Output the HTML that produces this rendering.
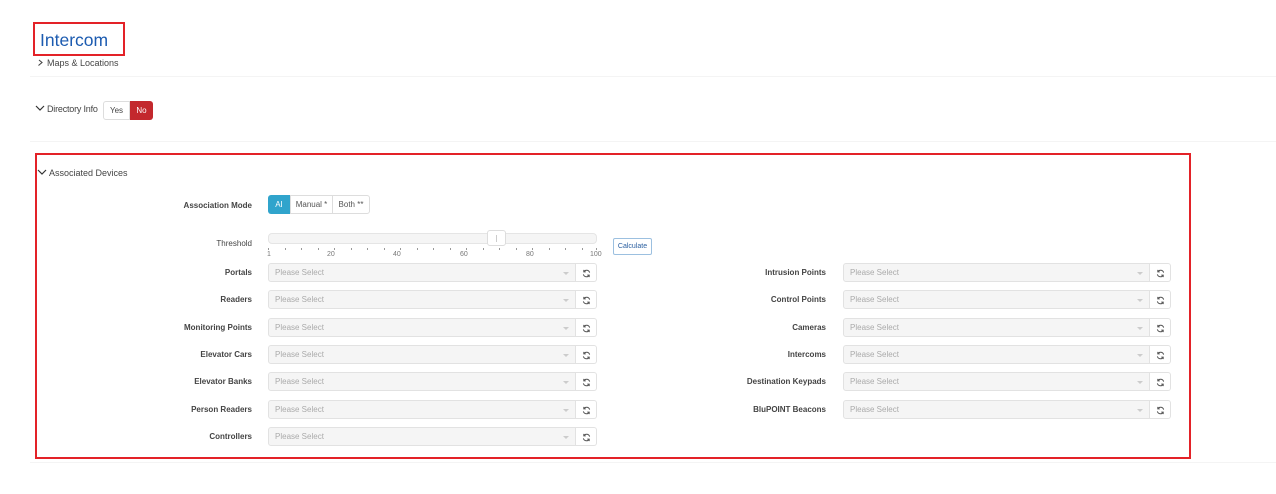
<!DOCTYPE html>
<html><head><meta charset="utf-8"><style>
*{box-sizing:border-box;margin:0;padding:0}
body{width:1276px;height:494px;background:#fff;font-family:"Liberation Sans",Arial,sans-serif;position:relative;overflow:hidden;color:#333}
.a{position:absolute}
.hr{position:absolute;height:1px;background:#f4f4f4}
.lbl{position:absolute;font-size:8px;font-weight:bold;color:#444;text-align:right;width:200px}
.sel{position:absolute;height:19px;background:#f5f5f5;border:1px solid #e2e2e2;border-radius:3px 0 0 3px;font-size:8px;color:#aaa;padding:4px 6px;line-height:9px}
.sel:after{content:"";position:absolute;right:6px;top:8px;border:3px solid transparent;border-top:3px solid #ccc}
.btn{position:absolute;height:19px;width:21px;background:#fff;border:1px solid #e2e2e2;border-left:none;border-radius:0 3px 3px 0}
.btn svg{position:absolute;left:6px;top:5px}
.tick{position:absolute;top:248px;width:1px;height:2px;background:#999}
.num{position:absolute;top:251px;font-size:7px;color:#777}
</style></head><body>
<div class="a" style="left:33px;top:22px;width:92px;height:34px;border:2px solid #e32228"></div>
<div class="a" style="left:40px;top:30px;font-size:17.5px;color:#1c5bb0">Intercom</div>
<svg class="a" style="left:37px;top:59px" width="7" height="7"><path d="M2 1L5 3.5L1.5 6.5" stroke="#444" stroke-width="1.1" fill="none"/></svg>
<div class="a" style="left:47px;top:58px;font-size:9px;color:#444">Maps &amp; Locations</div>
<div class="hr" style="left:30px;top:76px;width:1246px"></div>
<svg class="a" style="left:35px;top:105px" width="10" height="7"><path d="M1 1L5 5L9 1" stroke="#333" stroke-width="1.2" fill="none"/></svg>
<div class="a" style="left:47px;top:104px;font-size:9px;color:#444;letter-spacing:-0.2px">Directory Info</div>
<div class="a" style="left:103px;top:101px;width:27px;height:19px;border:1px solid #ddd;border-radius:3px 0 0 3px;font-size:8px;text-align:center;line-height:17px;color:#444">Yes</div>
<div class="a" style="left:130px;top:101px;width:23px;height:19px;background:#c3282d;border-radius:0 3px 3px 0;font-size:8px;text-align:center;line-height:19px;color:#fff">No</div>
<div class="hr" style="left:30px;top:141px;width:1246px"></div>
<div class="a" style="left:35px;top:153px;width:1156px;height:306px;border:2px solid #e32228"></div>
<div class="hr" style="left:30px;top:462px;width:1246px"></div>
<svg class="a" style="left:37px;top:169px" width="10" height="7"><path d="M1 1L5 5L9 1" stroke="#333" stroke-width="1.2" fill="none"/></svg>
<div class="a" style="left:49px;top:168px;font-size:9px;color:#444">Associated Devices</div>
<div class="lbl" style="left:52px;top:201px">Association Mode</div>
<div class="a" style="left:268px;top:195px;width:22px;height:19px;background:#30a4cc;border-radius:3px 0 0 3px;color:#fff;font-size:8px;text-align:center;line-height:19px">AI</div>
<div class="a" style="left:290px;top:195px;width:43px;height:19px;border:1px solid #ddd;font-size:8px;text-align:center;line-height:17px;color:#555">Manual *</div>
<div class="a" style="left:332px;top:195px;width:38px;height:19px;border:1px solid #ddd;border-radius:0 3px 3px 0;font-size:8px;text-align:center;line-height:17px;color:#555">Both **</div>
<div class="lbl" style="left:52px;top:239px;font-weight:normal;color:#444">Threshold</div>
<div class="a" style="left:268px;top:233px;width:329px;height:11px;background:#f5f5f5;border:1px solid #e5e5e5;border-radius:4px"></div>
<div class="a" style="left:487px;top:230px;width:19px;height:16px;background:#fff;border:1px solid #ddd;border-radius:3px"><div class="a" style="left:8px;top:4px;width:1px;height:7px;background:#ccc"></div></div>
<div class="tick" style="left:268px"></div><div class="tick" style="left:285px"></div><div class="tick" style="left:301px"></div><div class="tick" style="left:318px"></div><div class="tick" style="left:334px"></div><div class="tick" style="left:351px"></div><div class="tick" style="left:367px"></div><div class="tick" style="left:384px"></div><div class="tick" style="left:400px"></div><div class="tick" style="left:417px"></div><div class="tick" style="left:433px"></div><div class="tick" style="left:450px"></div><div class="tick" style="left:466px"></div><div class="tick" style="left:483px"></div><div class="tick" style="left:499px"></div><div class="tick" style="left:516px"></div><div class="tick" style="left:532px"></div><div class="tick" style="left:549px"></div><div class="tick" style="left:565px"></div><div class="tick" style="left:582px"></div><div class="tick" style="left:596px"></div>
<div class="num" style="left:267px">1</div><div class="num" style="left:327px">20</div><div class="num" style="left:393px">40</div><div class="num" style="left:460px">60</div><div class="num" style="left:526px">80</div><div class="num" style="left:590px">100</div>
<div class="a" style="left:613px;top:238px;width:39px;height:17px;border:1px solid #9cc0e0;border-radius:2px;font-size:7px;color:#2a5fa0;text-align:center;line-height:15px">Calculate</div>

<div id="rows"></div>
<script>
const L=["Portals","Readers","Monitoring Points","Elevator Cars","Elevator Banks","Person Readers","Controllers"];
const R=["Intrusion Points","Control Points","Cameras","Intercoms","Destination Keypads","BluPOINT Beacons"];
const ys=[263,290,318,345,372,400,427];
const icon='<svg width="9" height="9" viewBox="0 0 10 10"><path d="M8.5 4A3.6 3.6 0 0 0 2 3M1.5 6A3.6 3.6 0 0 0 8 7" stroke="#555" stroke-width="1.1" fill="none"/><path d="M2 1v2.2h2.2M8 9V6.8H5.8" stroke="#555" stroke-width="1.1" fill="none"/></svg>';
let h="";
function row(lbl,y,lx,sx,sw){h+=`<div class="lbl" style="left:${lx}px;top:${y+5}px">${lbl}</div><div class="sel" style="left:${sx}px;top:${y}px;width:${sw}px">Please Select</div><div class="btn" style="left:${sx+sw}px;top:${y}px">${icon}</div>`;}
L.forEach((l,i)=>row(l,ys[i],52,268,308));
R.forEach((l,i)=>row(l,ys[i],626,843,307));
document.getElementById("rows").innerHTML=h;
</script>
</body></html>
